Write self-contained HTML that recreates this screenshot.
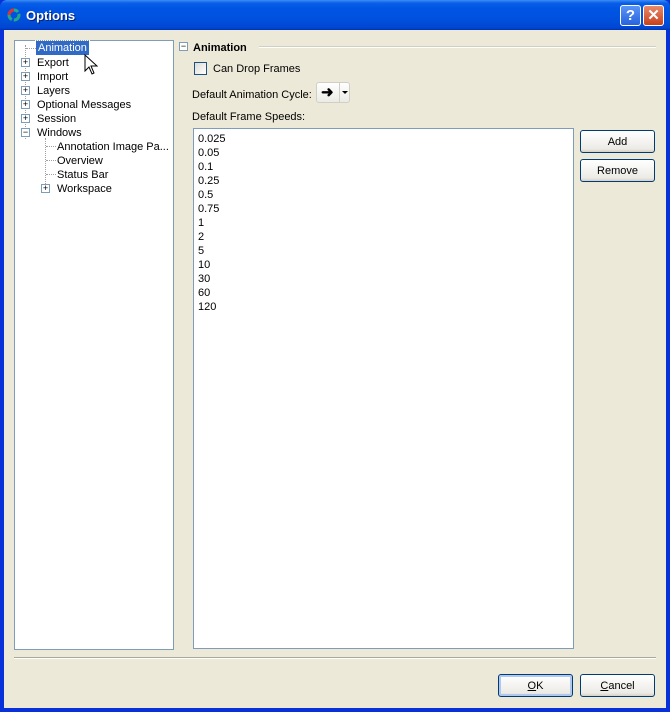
<!DOCTYPE html>
<html><head><style>
*{margin:0;padding:0;box-sizing:border-box}
body{width:670px;height:712px;overflow:hidden;font-family:"Liberation Sans",sans-serif;font-size:11px;color:#000;background:#0831d9;position:relative}
.title{position:absolute;left:0;top:0;width:670px;height:30px;background:linear-gradient(#3d8df5 0,#0a5fe8 3px,#0055e5 8px,#0050dd 20px,#0146d0 28px,#0031b4 30px);border-radius:7px 7px 0 0}
.title span{position:absolute;left:26px;top:8px;color:#fff;font-weight:bold;font-size:13px;text-shadow:1px 1px #0a1f6b}
.client{position:absolute;left:4px;top:30px;width:662px;height:678px;background:#ece9d8}
.box{position:absolute;background:#fff;border:1px solid #7f9db9}
.a{position:absolute;white-space:nowrap;padding-top:1px}
.btn{position:absolute;border:1px solid #003c74;border-radius:3px;background:linear-gradient(#fff,#ecebe6 85%,#d6d0c5);text-align:center;line-height:22px}
.pm{position:absolute;width:9px;height:9px;border:1px solid #7f9db9;background:#fff;font-size:9px;line-height:7px;text-align:center;color:#000}
.dot{position:absolute;border-top:1px dotted #a0a0a0}
.vd{position:absolute;border-left:1px dotted #a0a0a0}
</style></head><body>
<div class="title">
<svg style="position:absolute;left:7px;top:8px" width="14" height="14" viewBox="0 0 14 14"><circle cx="7" cy="7" r="5" fill="none" stroke="#2a8" stroke-width="3" stroke-dasharray="8 2"/><path d="M2 7a5 5 0 0 1 5-5" stroke="#d33" stroke-width="3" fill="none"/></svg>
<span>Options</span>
<div style="position:absolute;left:620px;top:5px;width:21px;height:21px;border:1px solid #fff;border-radius:3px;background:linear-gradient(#5b94f5,#2663de);color:#fff;font-weight:bold;font-size:15px;text-align:center;line-height:19px">?</div>
<div style="position:absolute;left:643px;top:5px;width:21px;height:21px;border:1px solid #fff;border-radius:3px;background:linear-gradient(#e88a6a,#c8401c);color:#fff;font-weight:bold;font-size:15px;text-align:center;line-height:19px">✕</div>
</div>
<div class="client">
<div class="box" style="left:10px;top:10px;width:160px;height:610px">
<div class="vd" style="left:10px;top:4px;height:94px"></div>
<div class="dot" style="left:11px;top:7px;width:10px"></div>
<div class="a" style="left:21px;top:0;background:#316ac5;color:#fff;padding:1px 2px 0;height:14px;line-height:13px;outline:1px dotted #fff">Animation</div>
<div class="pm" style="left:6px;top:17px">+</div><div class="a" style="left:22px;top:14px;line-height:14px">Export</div>
<div class="pm" style="left:6px;top:31px">+</div><div class="a" style="left:22px;top:28px;line-height:14px">Import</div>
<div class="pm" style="left:6px;top:45px">+</div><div class="a" style="left:22px;top:42px;line-height:14px">Layers</div>
<div class="pm" style="left:6px;top:59px">+</div><div class="a" style="left:22px;top:56px;line-height:14px">Optional Messages</div>
<div class="pm" style="left:6px;top:73px">+</div><div class="a" style="left:22px;top:70px;line-height:14px">Session</div>
<div class="pm" style="left:6px;top:87px">−</div><div class="a" style="left:22px;top:84px;line-height:14px">Windows</div>
<div class="vd" style="left:30px;top:97px;height:48px"></div>
<div class="dot" style="left:31px;top:105px;width:10px"></div><div class="a" style="left:42px;top:98px;line-height:14px">Annotation Image Pa...</div>
<div class="dot" style="left:31px;top:119px;width:10px"></div><div class="a" style="left:42px;top:112px;line-height:14px">Overview</div>
<div class="dot" style="left:31px;top:133px;width:10px"></div><div class="a" style="left:42px;top:126px;line-height:14px">Status Bar</div>
<div class="pm" style="left:26px;top:143px">+</div><div class="a" style="left:42px;top:140px;line-height:14px">Workspace</div>
</div>
<svg style="position:absolute;left:80px;top:24px" width="14" height="22" viewBox="0 0 14 22"><path d="M1 1v16l4-4 3 7 2-1-3-7h6z" fill="#fff" stroke="#000"/></svg>
<div class="pm" style="left:175px;top:12px">−</div>
<div class="a" style="left:189px;top:10px;font-weight:bold;line-height:14px">Animation</div>
<div style="position:absolute;left:255px;top:16px;width:397px;border-top:1px solid #d0d0bf;border-bottom:1px solid #fff"></div>
<div style="position:absolute;left:190px;top:32px;width:13px;height:13px;border:1px solid #1c5180;background:linear-gradient(135deg,#dcdbd5,#fff)"></div>
<div class="a" style="left:209px;top:31px;line-height:14px">Can Drop Frames</div>
<div class="a" style="left:188px;top:57px;line-height:14px">Default Animation Cycle:</div>
<div style="position:absolute;left:312px;top:52px;width:34px;height:21px;border:1px solid #d0cfc6;border-radius:3px;background:linear-gradient(#fff,#ecebe6)"><span style="position:absolute;left:4px;top:0;font-size:15px;font-weight:bold;line-height:19px">➜</span><span style="position:absolute;left:22px;top:0;height:19px;border-left:1px solid #d0cfc6"></span><span style="position:absolute;left:25px;top:8px;border:3px solid transparent;border-top:3px solid #000"></span></div>
<div class="a" style="left:188px;top:79px;line-height:14px">Default Frame Speeds:</div>
<div class="box" style="left:189px;top:98px;width:381px;height:521px;padding:3px 0 0 4px;line-height:14px">0.025<br>0.05<br>0.1<br>0.25<br>0.5<br>0.75<br>1<br>2<br>5<br>10<br>30<br>60<br>120</div>
<div class="btn" style="left:576px;top:100px;width:75px;height:23px">Add</div>
<div class="btn" style="left:576px;top:129px;width:75px;height:23px">Remove</div>
<div style="position:absolute;left:10px;top:627px;width:642px;border-top:1px solid #aca899;border-bottom:1px solid #fff"></div>
<div class="btn" style="left:494px;top:644px;width:75px;height:23px;box-shadow:inset 0 0 0 2px #b0c8f0"><u>O</u>K</div>
<div class="btn" style="left:576px;top:644px;width:75px;height:23px"><u>C</u>ancel</div>
</div>
</body></html>
